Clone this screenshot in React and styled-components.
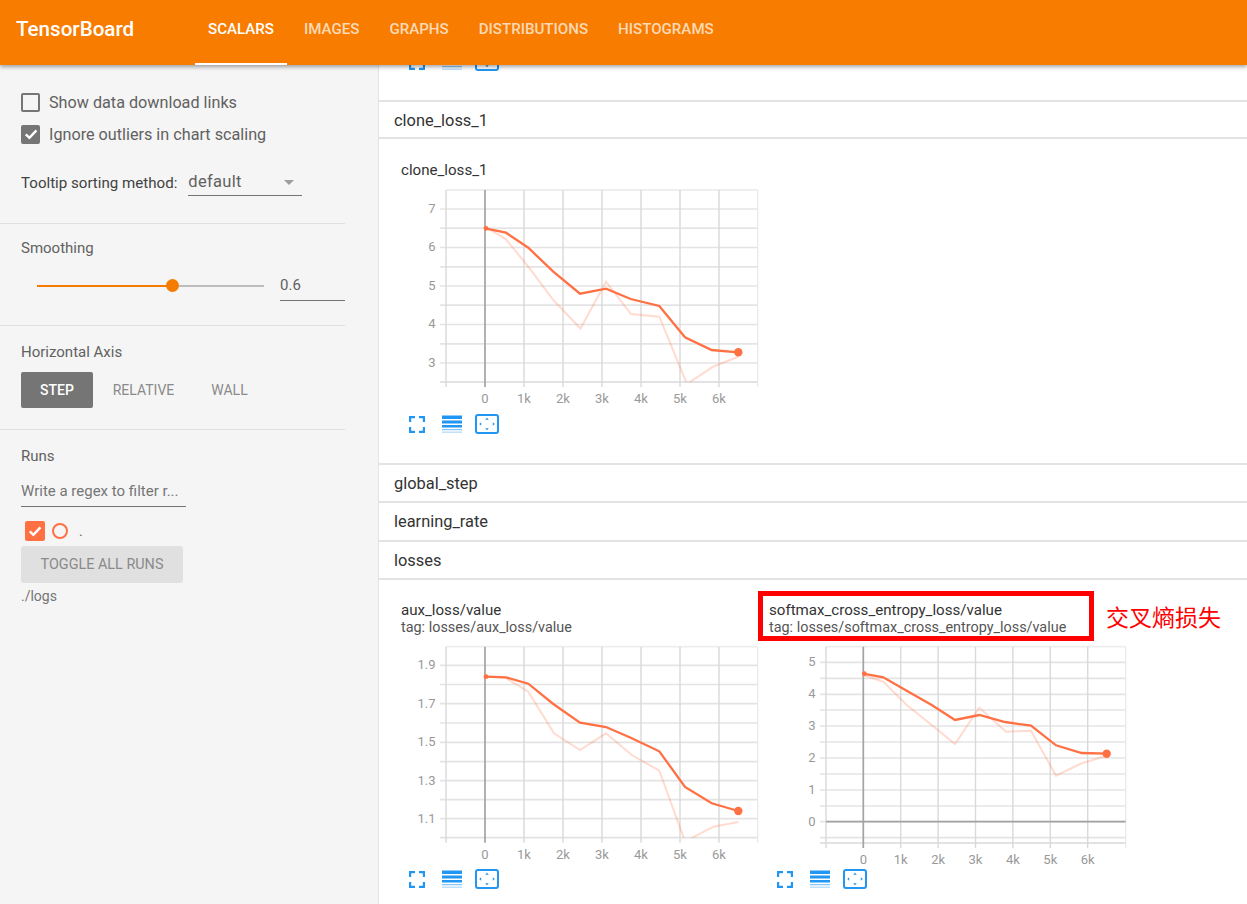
import React from "react";
import styled, { createGlobalStyle } from "styled-components";

const GlobalStyle = createGlobalStyle`
  html, body {
    margin: 0;
    padding: 0;
    height: 100%;
    overflow: hidden;
    background: #fff;
    font-family: Roboto, "Noto Sans CJK SC", sans-serif;
  }
`;

const BLUE = "#2196f3";
const LINE = "#ff7043";

const cloneChart = {
  id: "clone",
  viewY: 185,
  x0: 485,
  xStep: 39,
  left: 446,
  right: 757.7,
  top: 190,
  bottom: 382,
  hLines: [209, 228.2, 247.5, 266.8, 286, 305.2, 324.5, 343.8, 363],
  yLabels: [
    ["7", 208],
    ["6", 246.5],
    ["5", 285],
    ["4", 323.5],
    ["3", 362],
  ],
  main: "485,228.3 506,232.7 528.3,247.7 553.3,271.7 580,293.7 606,288.7 630.7,299 659.3,306 685,337.3 711.7,350 738.3,352.3",
  faint: "485,226.7 506,239.3 528.3,266.7 553.3,300 580.5,328.5 606,281.7 631,314 659.3,316.7 687,384 713,366.7 738.3,356.7",
  end: [738.3, 352.3],
};

const auxChart = {
  id: "aux",
  viewY: 640,
  x0: 485,
  xStep: 39,
  left: 446,
  right: 757.7,
  top: 646.7,
  bottom: 837.7,
  hLines: [665.3, 684.5, 703.7, 723, 742.3, 761.7, 780.7, 799.7, 818.7],
  yLabels: [
    ["1.9", 664.5],
    ["1.7", 703],
    ["1.5", 741.5],
    ["1.3", 780],
    ["1.1", 818],
  ],
  main: "485,676.7 506,677.3 528.3,683.7 553.3,704 580,722.7 606,727 630.7,737.7 659.3,751.3 685,787 711.7,803.3 738.3,811",
  faint: "485,676 506,678 528.3,691.7 554,733.3 580,750 606,733.3 631.7,755 659.3,770.7 684,838.5 688,840 713.3,826.7 738.3,822",
  end: [738.3, 811],
};

const softmaxChart = {
  id: "softmax",
  viewY: 640,
  x0: 863.3,
  xStep: 37.4,
  left: 826,
  right: 1125.7,
  top: 646.7,
  bottom: 843,
  hLines: [662.3, 678.3, 694.3, 710, 726, 742, 758, 774, 790, 806, 821.7, 837.7],
  zeroY: 821.7,
  yLabels: [
    ["5", 661.5],
    ["4", 693.5],
    ["3", 725],
    ["2", 757],
    ["1", 789],
    ["0", 821],
  ],
  main: "863.3,673.7 883.3,677.3 906.7,690.7 931.7,705 955,720 979.3,715 1005,722 1031,725.7 1056,745.3 1081.7,753 1106.7,753.7",
  faint: "863.3,675 883.3,681.7 906.7,705 931.7,725 955,744 979.3,707.7 1006,731.7 1031,730.7 1056,775.7 1081.7,763.3 1106.7,755.7",
  end: [1106.7, 753.7],
};

function LineChart({ data, originX }) {
  const xTicks = [0, 1, 2, 3, 4, 5, 6];
  return (
    <Plot viewBox={`${originX} ${data.viewY} 368 220`}>
      <clipPath id={data.id}>
        <rect x={data.left} y={data.top} width={data.right - data.left} height={data.bottom - data.top} />
      </clipPath>
      <line x1={data.left} x2={data.right} y1={data.top} y2={data.top} stroke="#eee" strokeWidth="1.8" />
      {data.hLines.map((y) => (
        <line key={y} x1={data.left - 6} x2={data.right} y1={y} y2={y} stroke="#e4e4e4" strokeWidth="1.7" />
      ))}
      <line x1={data.left - 6} x2={data.right} y1={data.bottom} y2={data.bottom} stroke="#e2e2e2" strokeWidth="1.8" />
      {[-1, ...xTicks, 7].map((t) => {
        const x = t === 7 ? data.right : t === -1 ? data.left : data.x0 + t * data.xStep;
        return (
          <line
            key={t}
            x1={x}
            x2={x}
            y1={data.top}
            y2={data.bottom + 5}
            stroke={t === 0 ? "#a3a3a3" : t === 7 ? "#eaeaea" : "#d9d9d9"}
            strokeWidth={t === 0 ? 1.7 : 1.4}
          />
        );
      })}
      {data.zeroY && (
        <line x1={data.left} x2={data.right} y1={data.zeroY} y2={data.zeroY} stroke="#a3a3a3" strokeWidth="1.7" />
      )}
      {data.yLabels.map(([label, y]) => (
        <AxisLabel key={label} x={data.left - 10.5} y={y + 4.5} textAnchor="end">
          {label}
        </AxisLabel>
      ))}
      {xTicks.map((t) => (
        <AxisLabel key={t} x={data.x0 + t * data.xStep} y={data.bottom + 21} textAnchor="middle">
          {t === 0 ? "0" : `${t}k`}
        </AxisLabel>
      ))}
      <g clipPath={`url(#${data.id})`}>
        <polyline points={data.faint} fill="none" stroke={LINE} strokeOpacity="0.25" strokeWidth="2" />
        <polyline points={data.main} fill="none" stroke={LINE} strokeWidth="2.3" />
        <circle cx={data.x0 + 1} cy={data.main.split(" ")[0].split(",")[1]} r="2.4" fill={LINE} />
      </g>
      <circle cx={data.end[0]} cy={data.end[1]} r="4.2" fill={LINE} />
    </Plot>
  );
}

function ChartButtons({ clipped }) {
  return (
    <ButtonRow $clipped={clipped}>
      <svg width="16" height="20" viewBox="0 0 16 20" fill="none" stroke={BLUE} strokeWidth="2.2">
        <path d="M1.1 8V3.1H6M10 3.1h4.9V8M14.9 13v4.9H10M6 17.9H1.1V13" />
      </svg>
      <svg width="24" height="20" viewBox="0 0 24 20" fill={BLUE}>
        <rect x="4" y="1.5" width="20" height="3.5" />
        <rect x="4" y="6.5" width="20" height="3" />
        <rect x="4" y="11" width="20" height="2.5" />
        <rect x="4" y="15" width="20" height="1.2" opacity="0.55" />
        <rect x="4" y="17.6" width="20" height="1.1" opacity="0.4" />
      </svg>
      <svg width="24" height="20" viewBox="0 0 24 20" fill={BLUE}>
        <rect x="1" y="1" width="22" height="18" rx="2" fill="none" stroke={BLUE} strokeWidth="2" />
        <path d="M12 3.8l1.8 2h-3.6zM12 16.2l1.8-2h-3.6zM4.2 10l2-1.8v3.6zM19.8 10l-2-1.8v3.6z" />
      </svg>
    </ButtonRow>
  );
}

function Check() {
  return (
    <svg width="14" height="14" viewBox="0 0 14 14" fill="none" stroke="#fff" strokeWidth="2.4">
      <path d="M1.8 7.4l3.6 3.4 7-7.4" />
    </svg>
  );
}

export default function App() {
  const tabs = ["Scalars", "Images", "Graphs", "Distributions", "Histograms"];
  return (
    <Page>
      <GlobalStyle />
      <Header>
        <Brand>TensorBoard</Brand>
        <Tabs>
          {tabs.map((t, i) => (
            <Tab key={t} $active={i === 0}>
              {t}
            </Tab>
          ))}
        </Tabs>
      </Header>
      <Body>
        <Sidebar>
          <OptionsSection>
            <CheckRow>
              <CheckBox />
              <CheckLabel>Show data download links</CheckLabel>
            </CheckRow>
            <CheckRow>
              <CheckBox $checked>
                <Check />
              </CheckBox>
              <CheckLabel>Ignore outliers in chart scaling</CheckLabel>
            </CheckRow>
            <SortRow>
              <SortLabel>Tooltip sorting method:</SortLabel>
              <Select>
                default
                <Arrow />
              </Select>
            </SortRow>
          </OptionsSection>
          <SmoothSection>
            <SectionLabel>Smoothing</SectionLabel>
            <SliderRow>
              <SliderTrack>
                <SliderFill $value={59.5} />
                <SliderThumb $value={59.5} />
              </SliderTrack>
              <SliderValue>0.6</SliderValue>
            </SliderRow>
          </SmoothSection>
          <AxisSection>
            <SectionLabel>Horizontal Axis</SectionLabel>
            <AxisButtons>
              <AxisButton $active>Step</AxisButton>
              <AxisButton $w={101}>Relative</AxisButton>
              <AxisButton $w={71}>Wall</AxisButton>
            </AxisButtons>
          </AxisSection>
          <RunsSection>
            <SectionLabel>Runs</SectionLabel>
            <RegexInput>Write a regex to filter r...</RegexInput>
            <RunRow>
              <RunCheck>
                <Check />
              </RunCheck>
              <RunDot />
              <RunName>.</RunName>
            </RunRow>
            <ToggleButton>Toggle all runs</ToggleButton>
            <LogDir>./logs</LogDir>
          </RunsSection>
        </Sidebar>
        <Main>
          <ClippedTop>
            <ChartButtons clipped />
          </ClippedTop>
          <CategoryBar>clone_loss_1</CategoryBar>
          <ChartSection>
            <Card>
              <ChartTitle>clone_loss_1</ChartTitle>
              <LineChart data={cloneChart} originX={401} />
              <ChartButtons />
            </Card>
          </ChartSection>
          <CategoryBar $h={40}>global_step</CategoryBar>
          <CategoryBar $noTop>learning_rate</CategoryBar>
          <CategoryBar $noTop $h={38}>
            losses
          </CategoryBar>
          <ChartSection $overlap>
            <Card>
              <ChartTitle>aux_loss/value</ChartTitle>
              <ChartTag>tag: losses/aux_loss/value</ChartTag>
              <LineChart data={auxChart} originX={401} />
              <ChartButtons />
            </Card>
            <Card>
              <Highlight />
              <Annotation>交叉熵损失</Annotation>
              <ChartTitle>softmax_cross_entropy_loss/value</ChartTitle>
              <ChartTag>tag: losses/softmax_cross_entropy_loss/value</ChartTag>
              <LineChart data={softmaxChart} originX={769} />
              <ChartButtons />
            </Card>
          </ChartSection>
        </Main>
      </Body>
    </Page>
  );
}

const Page = styled.div`
  width: 1247px;
  height: 904px;
  overflow: hidden;
  display: flex;
  flex-direction: column;
`;

const Header = styled.header`
  position: relative;
  z-index: 2;
  flex: none;
  height: 65px;
  display: flex;
  align-items: stretch;
  background: #f77c00;
  box-shadow: 0 2px 4px rgba(0, 0, 0, 0.35);
  color: #fff;
`;

const Brand = styled.div`
  width: 177px;
  padding-left: 16px;
  font-size: 20.6px;
  font-weight: 500;
  line-height: 59px;
`;

const Tabs = styled.nav`
  display: flex;
`;

const Tab = styled.div`
  position: relative;
  padding: 0 15px;
  font-size: 15.1px;
  font-weight: 500;
  line-height: 59px;
  text-transform: uppercase;
  color: ${(p) => (p.$active ? "#fff" : "rgba(255,255,255,0.72)")};
  &::after {
    content: "";
    display: ${(p) => (p.$active ? "block" : "none")};
    position: absolute;
    left: 2px;
    right: 2px;
    bottom: 0;
    height: 2px;
    background: #fff;
  }
`;

const Body = styled.div`
  flex: 1;
  display: flex;
  min-height: 0;
`;

const Sidebar = styled.aside`
  flex: none;
  box-sizing: border-box;
  width: 379px;
  padding-right: 33px;
  background: #f5f5f5;
  border-right: 1px solid #e4e4e4;
  color: #616161;
`;

const Section = styled.section`
  padding-left: 21px;
  border-bottom: 1px solid #e0e0e0;
`;

const OptionsSection = styled(Section)`
  padding-top: 28px;
  padding-bottom: 27px;
`;

const SmoothSection = styled(Section)`
  padding-top: 16px;
  padding-bottom: 24px;
`;

const AxisSection = styled(Section)`
  padding-top: 18px;
  padding-bottom: 21px;
`;

const RunsSection = styled(Section)`
  padding-top: 18px;
  border-bottom: none;
`;

const CheckRow = styled.div`
  display: flex;
  align-items: center;
  gap: 9px;
  height: 18px;
  margin-bottom: 14px;
`;

const CheckBox = styled.div`
  box-sizing: border-box;
  width: 19px;
  height: 19px;
  border-radius: 2px;
  border: 2px solid #757575;
  background: ${(p) => (p.$checked ? "#757575" : "transparent")};
  display: flex;
  align-items: center;
  justify-content: center;
  svg {
    flex: none;
  }
`;

const CheckLabel = styled.span`
  font-size: 16.2px;
  color: #616161;
`;

const SortRow = styled.div`
  display: flex;
  align-items: center;
  gap: 11px;
  margin-top: 27px;
  height: 26px;
`;

const SortLabel = styled.span`
  font-size: 15.1px;
  color: #424242;
`;

const Select = styled.div`
  box-sizing: border-box;
  position: relative;
  width: 114px;
  height: 26px;
  font-size: 16.5px;
  letter-spacing: 0.3px;
  line-height: 23px;
  color: #616161;
  border-bottom: 1px solid #757575;
`;

const Arrow = styled.span`
  position: absolute;
  right: 8px;
  top: 10px;
  border-left: 5px solid transparent;
  border-right: 5px solid transparent;
  border-top: 5px solid #9e9e9e;
`;

const SectionLabel = styled.div`
  font-size: 15px;
  line-height: 16px;
  color: #616161;
`;

const SliderRow = styled.div`
  display: flex;
  align-items: center;
  margin-top: 15px;
  height: 30px;
`;

const SliderTrack = styled.div`
  position: relative;
  width: 227px;
  height: 2px;
  margin-left: 16px;
  background: #bdbdbd;
`;

const SliderFill = styled.div`
  height: 2px;
  width: ${(p) => p.$value}%;
  background: #f57c00;
`;

const SliderThumb = styled.div`
  position: absolute;
  left: ${(p) => p.$value}%;
  top: -6px;
  width: 13px;
  height: 13px;
  margin-left: -6px;
  border-radius: 50%;
  background: #f57c00;
`;

const SliderValue = styled.div`
  box-sizing: border-box;
  width: 65px;
  height: 30px;
  margin-left: 16px;
  font-size: 15px;
  line-height: 29px;
  color: #616161;
  border-bottom: 1px solid #757575;
`;

const AxisButtons = styled.div`
  display: flex;
  margin-top: 12px;
`;

const AxisButton = styled.div`
  box-sizing: border-box;
  width: ${(p) => (p.$w ? `${p.$w}px` : "72px")};
  height: 36px;
  text-align: center;
  font-size: 14px;
  font-weight: ${(p) => (p.$active ? 500 : 400)};
  line-height: 36px;
  text-transform: uppercase;
  border-radius: 2px;
  color: ${(p) => (p.$active ? "#fff" : "#8a8a8a")};
  background: ${(p) => (p.$active ? "#757575" : "transparent")};
`;

const RegexInput = styled.div`
  box-sizing: border-box;
  width: 165px;
  height: 27px;
  margin-top: 16px;
  font-size: 15px;
  line-height: 22px;
  color: #757575;
  border-bottom: 1px solid #757575;
  white-space: nowrap;
`;

const RunRow = styled.div`
  display: flex;
  align-items: center;
  height: 20px;
  margin-top: 14px;
  padding-left: 4px;
`;

const RunCheck = styled.div`
  width: 20px;
  height: 20px;
  border-radius: 2px;
  background: #ff7043;
  display: flex;
  align-items: center;
  justify-content: center;
`;

const RunDot = styled.div`
  box-sizing: border-box;
  width: 16px;
  height: 16px;
  margin-left: 7px;
  border: 2px solid #ff7043;
  border-radius: 50%;
`;

const RunName = styled.span`
  margin-left: 11px;
  font-size: 14px;
  color: #616161;
`;

const ToggleButton = styled.div`
  width: 162px;
  height: 37px;
  margin-top: 5px;
  border-radius: 3px;
  background: #e0e0e0;
  text-align: center;
  font-size: 14.4px;
  line-height: 37px;
  text-transform: uppercase;
  color: #8a8a8a;
`;

const LogDir = styled.div`
  margin-top: 5px;
  font-size: 14px;
  line-height: 16px;
  color: #757575;
`;

const Main = styled.main`
  flex: 1;
  min-width: 0;
  overflow: hidden;
`;

const ClippedTop = styled.div`
  height: 35px;
  padding-left: 30px;
  overflow: hidden;
`;

const CategoryBar = styled.div`
  box-sizing: border-box;
  height: ${(p) => (p.$h ? `${p.$h}px` : "39px")};
  padding-left: 15px;
  font-size: 16.4px;
  line-height: 37px;
  color: #333;
  border-top: ${(p) => (p.$noTop ? "none" : "2px solid #e3e3e3")};
  border-bottom: 2px solid #e3e3e3;
`;

const ChartSection = styled.div`
  display: flex;
  margin-top: ${(p) => (p.$overlap ? "-1px" : "0")};
  padding-left: 22px;
  padding-bottom: 29px;
`;

const Card = styled.div`
  position: relative;
  flex: none;
  width: 368px;
  padding-top: 22px;
`;

const ChartTitle = styled.div`
  font-size: 15.1px;
  line-height: 18px;
  color: #333;
`;

const ChartTag = styled.div`
  margin: 2px 0 -1px;
  font-size: 14.4px;
  line-height: 14px;
  color: #555;
`;

const Plot = styled.svg`
  display: block;
  width: 368px;
  height: 220px;
  margin-top: 6px;
  overflow: visible;
`;

const AxisLabel = styled.text`
  font-family: Roboto, sans-serif;
  font-size: 13px;
  fill: #999;
`;

const ButtonRow = styled.div`
  display: flex;
  gap: 13px;
  height: 20px;
  margin-top: ${(p) => (p.$clipped ? "-14px" : "9px")};
  padding-left: ${(p) => (p.$clipped ? "0" : "8px")};
`;

const Highlight = styled.div`
  position: absolute;
  left: -11px;
  top: 12px;
  box-sizing: border-box;
  width: 336px;
  height: 50px;
  border: 5px solid #ff0000;
`;

const Annotation = styled.div`
  position: absolute;
  left: 337px;
  top: 24px;
  font-size: 23px;
  line-height: 26px;
  white-space: nowrap;
  color: #ff0000;
  font-family: "Noto Sans CJK SC", sans-serif;
`;
